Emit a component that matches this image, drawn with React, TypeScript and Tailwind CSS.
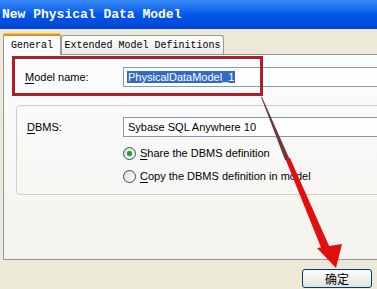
import React from "react";

const sans = { fontFamily: '"Liberation Sans", Arial, sans-serif' };

function U({ c }: { c: string }) {
  return <span className="underline underline-offset-2">{c}</span>;
}

function Radio({ checked, children }: { checked?: boolean; children: React.ReactNode }) {
  return (
    <div className="flex items-center h-[13px]">
      <span className="relative w-[13px] h-[13px] rounded-full border border-[#1c5180] bg-gradient-to-br from-[#dcdcd5] to-white flex items-center justify-center">
        {checked && <span className="w-[5px] h-[5px] rounded-full bg-[#21a121] shadow-[0_0_1px_#55c455]" />}
      </span>
      <span className="ml-[4px] text-[11px] leading-none text-black" style={sans}>
        {children}
      </span>
    </div>
  );
}

export default function App() {
  return (
    <div className="relative w-[377px] h-[289px] overflow-hidden bg-[#ece9d8]">
      {/* Title bar */}
      <div className="h-[29px] bg-gradient-to-b from-[#3a8cf8] via-[#0058e8] to-[#0044d4] flex items-center pl-[2px]">
        <span
          className="text-white font-bold text-[13px] leading-none whitespace-pre"
          style={{ fontFamily: '"Liberation Mono", "Courier New", monospace' }}
        >
          New Physical Data Model
        </span>
      </div>

      {/* Tabs */}
      <div className="flex items-end pl-[3px] mt-[4px] h-[22px]" style={{ fontFamily: '"Liberation Mono", "Courier New", monospace' }}>
        <div className="relative z-10 w-[58px] h-[22px] bg-[#fcfcfe] border border-b-0 border-[#919b9c] rounded-t-[3px] flex items-center justify-center text-[10px] text-black">
          <span className="absolute left-[-1px] right-[-1px] top-[-1px] h-[3px] rounded-t-[3px] bg-[#e68b2c] border-t border-[#ffc83c]" />
          <span className="mt-[2px]">General</span>
        </div>
        <div className="w-[163px] h-[19px] mb-[1px] bg-gradient-to-b from-white to-[#ecebe6] border border-b-0 border-[#919b9c] rounded-t-[3px] flex items-center justify-center text-[10px] text-black">
          Extended Model Definitions
        </div>
      </div>

      {/* Panel */}
      <div className="relative ml-[3px] -mt-[1px] w-[390px] h-[206px] border border-[#919b9c] bg-gradient-to-b from-[#fcfcfe] to-[#f4f3ee]">
        {/* Model name row */}
        <div className="flex items-center mt-[12px] pl-[21px]">
          <span className="w-[98px] text-[11px] text-black" style={sans}>
            <U c="M" />odel name:
          </span>
          <div className="flex-1 h-[20px] border border-[#7f9db9] bg-white flex items-center pl-[3px]">
            <span className="bg-[#316ac5] text-white text-[11px] leading-[12px] px-[1px]" style={sans}>
              PhysicalDataModel_1
            </span>
          </div>
        </div>

        {/* Group box */}
        <div className="ml-[12px] mt-[18px] h-[90px] border border-[#d0d0bf] rounded-[4px] pt-[11px] pl-[10px]">
          <div className="flex items-center">
            <span className="w-[96px] text-[11px] text-black" style={sans}>
              <U c="D" />BMS:
            </span>
            <div className="flex-1 h-[20px] border border-[#7f9db9] bg-white flex items-center pl-[4px] text-[11px] text-black" style={sans}>
              Sybase SQL Anywhere 10
            </div>
          </div>
          <div className="ml-[96px] mt-[10px] flex flex-col gap-[10px]">
            <Radio checked>
              <U c="S" />hare the DBMS definition
            </Radio>
            <Radio>
              <U c="C" />opy the DBMS definition in model
            </Radio>
          </div>
        </div>
      </div>

      {/* Button */}
      <div className="flex justify-end pr-[5px] mt-[9px]">
        <div
          className="w-[70px] h-[19px] rounded-[3px] border border-[#003c74] bg-gradient-to-b from-white to-[#e3e2da] flex items-center justify-center text-[12px] text-black"
          style={{ fontFamily: '"Noto Sans CJK SC", sans-serif' }}
        >
          确定
        </div>
      </div>

      {/* Red annotation box */}
      <div className="absolute left-[12px] top-[56px] w-[251px] h-[40px] border-[3px] border-[#b01e2a] pointer-events-none" />

      {/* Red arrow */}
      <svg className="absolute left-0 top-0 pointer-events-none" width="377" height="289" viewBox="0 0 377 289">
        <polygon points="261,97 262,97 290,160 285,160" fill="#6b3a3a" />
        <polygon points="285,158 290,158 330,248 322,250" fill="#e01010" />
        <polygon points="317,248 342,244 336,268" fill="#e01010" />
      </svg>
    </div>
  );
}
